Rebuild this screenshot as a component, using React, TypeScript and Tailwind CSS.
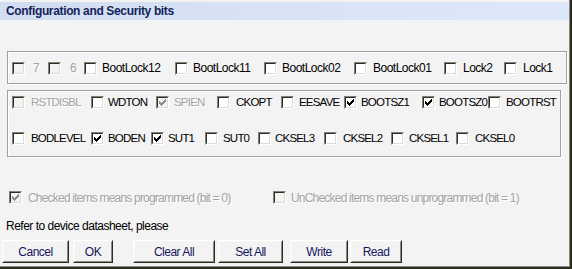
import React from 'react';

type Bit = { label: string; w: string; checked?: boolean; disabled?: boolean; gap?: string };

const lockBits: Bit[] = [
  { label: '7', w: 'w-[36px]', disabled: true, gap: 'ml-[8px]' },
  { label: '6', w: 'w-[36px]', disabled: true, gap: 'ml-[9px]' },
  { label: 'BootLock12', w: 'w-[91px]' },
  { label: 'BootLock11', w: 'w-[89px]' },
  { label: 'BootLock02', w: 'w-[90px]' },
  { label: 'BootLock01', w: 'w-[90px]', gap: 'ml-[6px]' },
  { label: 'Lock2', w: 'w-[60px]', gap: 'ml-[6px]' },
  { label: 'Lock1', w: 'w-[50px]', gap: 'ml-[6px]' },
];

const fuseHigh: Bit[] = [
  { label: 'RSTDISBL', w: 'w-[79px]', disabled: true, gap: 'ml-[6px]' },
  { label: 'WDTON', w: 'w-[65px]', gap: 'ml-[4px]' },
  { label: 'SPIEN', w: 'w-[61px]', checked: true, disabled: true },
  { label: 'CKOPT', w: 'w-[64px]', gap: 'ml-[6px]' },
  { label: 'EESAVE', w: 'w-[63px]' },
  { label: 'BOOTSZ1', w: 'w-[78px]', checked: true, gap: 'ml-[4px]' },
  { label: 'BOOTSZ0', w: 'w-[66px]', checked: true, gap: 'ml-[4px]' },
  { label: 'BOOTRST', w: 'w-[66px]' },
];

const fuseLow: Bit[] = [
  { label: 'BODLEVEL', w: 'w-[79px]', gap: 'ml-[6px]' },
  { label: 'BODEN', w: 'w-[60px]', checked: true, gap: 'ml-[4px]' },
  { label: 'SUT1', w: 'w-[54px]', checked: true, gap: 'ml-[4px]' },
  { label: 'SUT0', w: 'w-[53px]' },
  { label: 'CKSEL3', w: 'w-[66px]', gap: 'ml-[4px]' },
  { label: 'CKSEL2', w: 'w-[67px]', gap: 'ml-[6px]' },
  { label: 'CKSEL1', w: 'w-[65px]' },
  { label: 'CKSEL0', w: 'w-[60px]', gap: 'ml-[6px]' },
];

const buttons = [
  { label: 'Cancel', cls: 'ml-[2px] w-[67px]' },
  { label: 'OK', cls: 'ml-[4px] w-[40px]' },
  { label: 'Clear All', cls: 'ml-[20px] w-[82px]' },
  { label: 'Set All', cls: 'ml-[3px] w-[65px]' },
  { label: 'Write', cls: 'ml-[7px] w-[58px]' },
  { label: 'Read', cls: 'ml-[2px] w-[52px]' },
];

const dimText = 'text-[#a3a3a3] [text-shadow:1px_1px_0_#fff]';

function Box({ checked, disabled }: { checked?: boolean; disabled?: boolean }) {
  return (
    <div className="w-[13px] h-[13px] shrink-0 flex border border-t-[#808080] border-l-[#808080] border-r-white border-b-white">
      <div className={`flex-1 border border-t-[#2e2e1a] border-l-[#2e2e1a] border-r-[#dcdcdc] border-b-[#dcdcdc] ${disabled ? 'bg-[#f3f3f3]' : 'bg-white'}`}>
        {checked && (
          <svg width="9" height="9" viewBox="0 0 9 9" shapeRendering="crispEdges" className="block">
            <path
              d="M1 3h1v3H1z M2 4h1v3H2z M3 5h1v3H3z M4 4h1v3H4z M5 3h1v3H5z M6 2h1v3H6z M7 1h1v3H7z"
              fill={disabled ? '#8c8c8c' : '#000'}
            />
          </svg>
        )}
      </div>
    </div>
  );
}

function Check({ bit, caps }: { bit: Bit; caps?: boolean }) {
  return (
    <div className={`${bit.w} shrink-0 flex items-center h-[13px]`}>
      <Box checked={bit.checked} disabled={bit.disabled} />
      <span
        className={`${bit.gap ?? 'ml-[5px]'} whitespace-nowrap leading-[13px] ${
          caps ? 'text-[11.5px] tracking-[-0.8px]' : ''
        } ${bit.disabled ? dimText : 'text-black'}`}
      >
        {bit.label}
      </span>
    </div>
  );
}

export default function App() {
  return (
    <div className="w-[572px] h-[269px] border-r-2 border-b-2 border-[#2b2b1a] font-['Liberation_Sans',Arial,sans-serif] text-[12px] tracking-[-0.5px]">
      <div className="h-full flex flex-col bg-[#f3f3f3] border-r border-b border-[#8a8a8a]">
        <div className="mt-[2px] h-[18px] flex items-center pl-[6px] bg-linear-to-r from-[#d3ddf1] to-[#dde9fb]">
          <span className="font-bold text-[#13235a] tracking-[-0.35px]">Configuration and Security bits</span>
        </div>

        <div className="mt-[31px] ml-[7px] w-[560px] h-[33px] border border-[#a0a0a0] shadow-[inset_1px_1px_0_#fff,1px_1px_0_#fff] pl-[4px] pt-[10px]">
          <div className="flex">
            {lockBits.map((b) => (
              <Check key={b.label} bit={b} />
            ))}
          </div>
        </div>

        <div className="mt-[6px] ml-[7px] w-[554px] h-[67px] border border-[#a0a0a0] shadow-[inset_1px_1px_0_#fff,1px_1px_0_#fff] pl-[4px] pt-[5px] flex flex-col gap-[23px]">
          <div className="flex">
            {fuseHigh.map((b) => (
              <Check key={b.label} bit={b} caps />
            ))}
          </div>
          <div className="flex">
            {fuseLow.map((b) => (
              <Check key={b.label} bit={b} caps />
            ))}
          </div>
        </div>

        <div className="mt-[34px] h-[13px] flex items-center tracking-[-0.8px]">
          <div className="ml-[9px] w-[264px] flex items-center">
            <Box checked disabled />
            <span className={`ml-[6px] whitespace-nowrap ${dimText}`}>Checked items means programmed (bit = 0)</span>
          </div>
          <div className="flex items-center">
            <Box disabled />
            <span className={`ml-[5px] whitespace-nowrap ${dimText}`}>UnChecked items means unprogrammed (bit = 1)</span>
          </div>
        </div>

        <div className="mt-[15px] ml-[6px] h-[14px] leading-[14px] text-black">Refer to device datasheet, please</div>

        <div className="mt-[7px] flex">
          {buttons.map((b) => (
            <div
              key={b.label}
              className={`${b.cls} h-[23px] flex border border-t-white border-l-white border-r-[#2b2b1a] border-b-[#2b2b1a]`}
            >
              <div className="flex-1 flex items-center justify-center border border-t-[#f6f6f6] border-l-[#f6f6f6] border-r-[#8a8a8a] border-b-[#8a8a8a] text-[#16165c]">
                {b.label}
              </div>
            </div>
          ))}
        </div>
      </div>
    </div>
  );
}
